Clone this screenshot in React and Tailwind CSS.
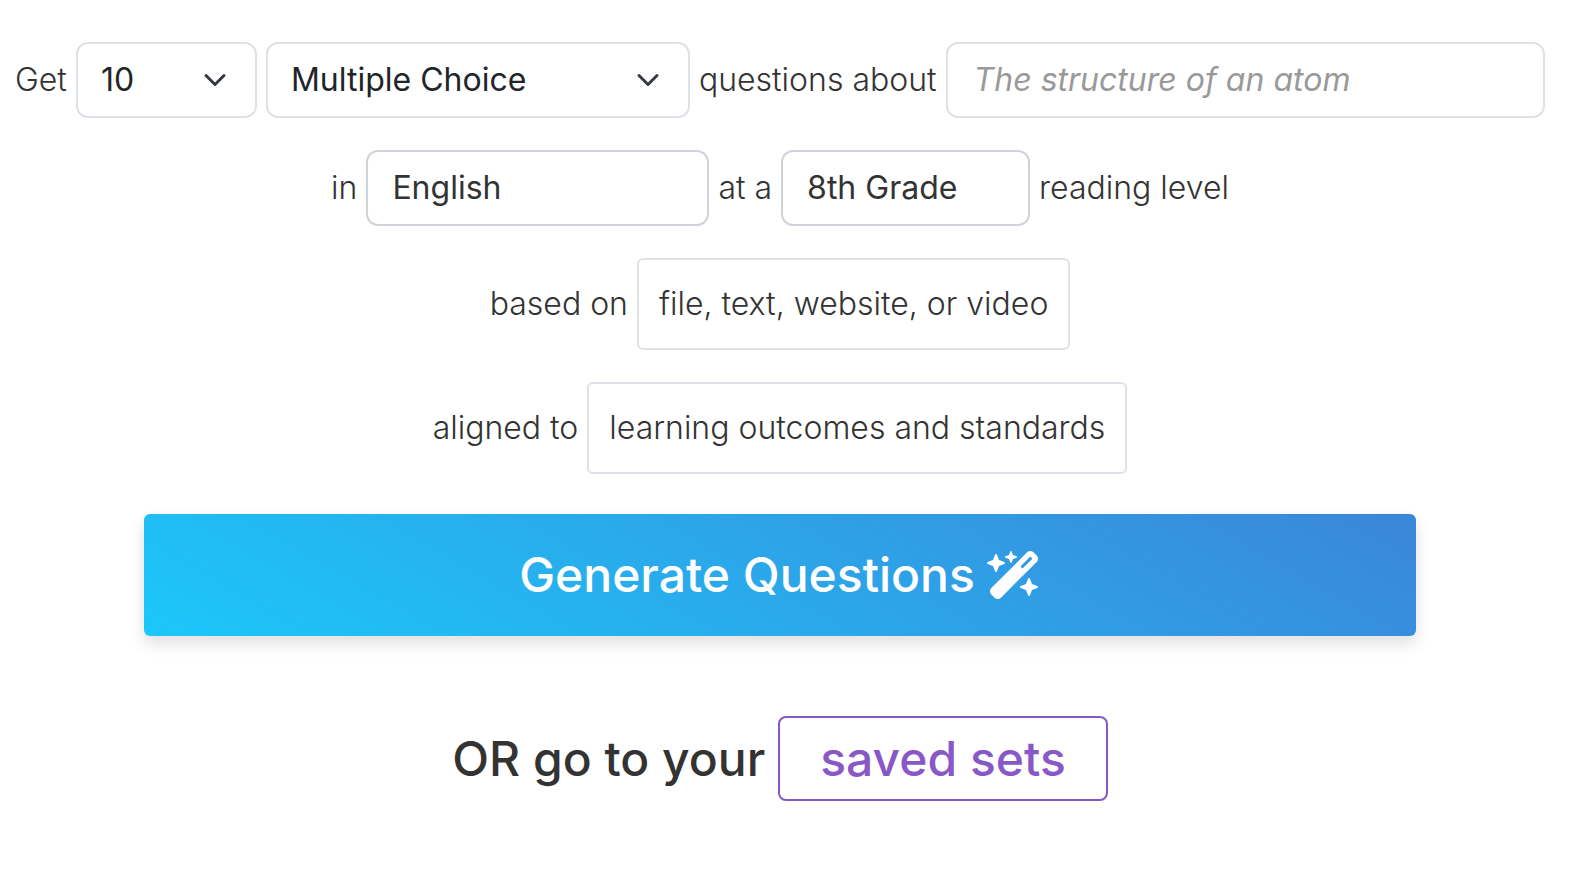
import { useState } from 'react'
import { FaWandMagicSparkles } from 'react-icons/fa6'

const COUNTS = ['5', '10', '15', '20']
const TYPES = ['Multiple Choice', 'True or False', 'Short Answer', 'Fill in the Blank']

const fieldClass = 'h-[76px] rounded-xl border-2 bg-white text-[32px] leading-[48px]'

function Select({ label, value, onChange, options, className }) {
  return (
    <div className={`relative shrink-0 ${className}`}>
      <select
        aria-label={label}
        value={value}
        onChange={(e) => onChange(e.target.value)}
        className={`${fieldClass} w-full appearance-none border-[#dee2e6] pl-[23px] pr-18 text-[#212529]`}
      >
        {options.map((o) => (
          <option key={o}>{o}</option>
        ))}
      </select>
      <svg
        viewBox="0 0 16 16"
        className="pointer-events-none absolute right-[30px] top-1/2 h-6 w-6 -translate-y-1/2"
        fill="none"
        stroke="#343a40"
        strokeWidth="2"
        strokeLinecap="round"
        strokeLinejoin="round"
      >
        <path d="m2 5 6 6 6-6" />
      </svg>
    </div>
  )
}

function Row({ children }) {
  return <div className="flex items-center justify-center gap-[9px] whitespace-nowrap">{children}</div>
}

function PickerButton({ children, ...props }) {
  return (
    <button type="button" className="h-[92px] rounded-md border-2 border-[#dee2e6] px-5" {...props}>
      {children}
    </button>
  )
}

export default function App() {
  const [count, setCount] = useState('10')
  const [type, setType] = useState('Multiple Choice')
  const [topic, setTopic] = useState('')
  const [language, setLanguage] = useState('English')
  const [grade, setGrade] = useState('8th Grade')

  return (
    <main className="bg-white pt-[42px] pr-[27px] pl-[15px] font-['Inter',sans-serif] text-[32px] leading-[48px] font-light text-[#333]">
      <form onSubmit={(e) => e.preventDefault()}>
        <div className="flex flex-col gap-8">
          <Row>
            <span>Get</span>
            <Select label="Number of questions" value={count} onChange={setCount} options={COUNTS} className="w-[181px] font-normal" />
            <Select label="Question type" value={type} onChange={setType} options={TYPES} className="w-[424px] font-normal" />
            <label htmlFor="topic">questions about</label>
            <input
              id="topic"
              value={topic}
              onChange={(e) => setTopic(e.target.value)}
              placeholder="The structure of an atom"
              className={`${fieldClass} min-w-0 flex-1 border-[#dee2e6] px-[26px] pb-0.5 font-normal placeholder:text-[#999] placeholder:italic`}
            />
          </Row>

          <Row>
            <label htmlFor="language">in</label>
            <input
              id="language"
              value={language}
              onChange={(e) => setLanguage(e.target.value)}
              className={`${fieldClass} w-[343px] border-[#ced4da] px-6 pb-0.5 font-normal`}
            />
            <label htmlFor="grade">at a</label>
            <input
              id="grade"
              value={grade}
              onChange={(e) => setGrade(e.target.value)}
              className={`${fieldClass} w-[249px] border-[#ced4da] px-6 pb-0.5 font-normal`}
            />
            <span>reading level</span>
          </Row>

          <Row>
            <span>based on</span>
            <PickerButton>file, text, website, or video</PickerButton>
          </Row>

          <Row>
            <span>aligned to</span>
            <PickerButton>learning outcomes and standards</PickerButton>
          </Row>
        </div>

        <div className="mt-10 px-[129px]">
          <button
            type="submit"
            className="flex h-[122px] w-full items-center justify-center gap-3 rounded-md bg-[linear-gradient(30deg,#1cc7fa,#3b86d8)] text-5xl font-medium text-white shadow-[0_8px_16px_rgba(0,0,0,0.12)]"
          >
            Generate Questions
            <FaWandMagicSparkles className="h-12 w-[54px]" />
          </button>
        </div>
      </form>

      <div className="mt-20 flex items-center justify-center gap-[13px] text-5xl font-medium">
        <span>OR go to your</span>
        <a href="#saved" className="flex h-[85px] items-center rounded-lg border-2 border-[#8758c6] px-10 text-[#8758c6]">
          saved sets
        </a>
      </div>
    </main>
  )
}
